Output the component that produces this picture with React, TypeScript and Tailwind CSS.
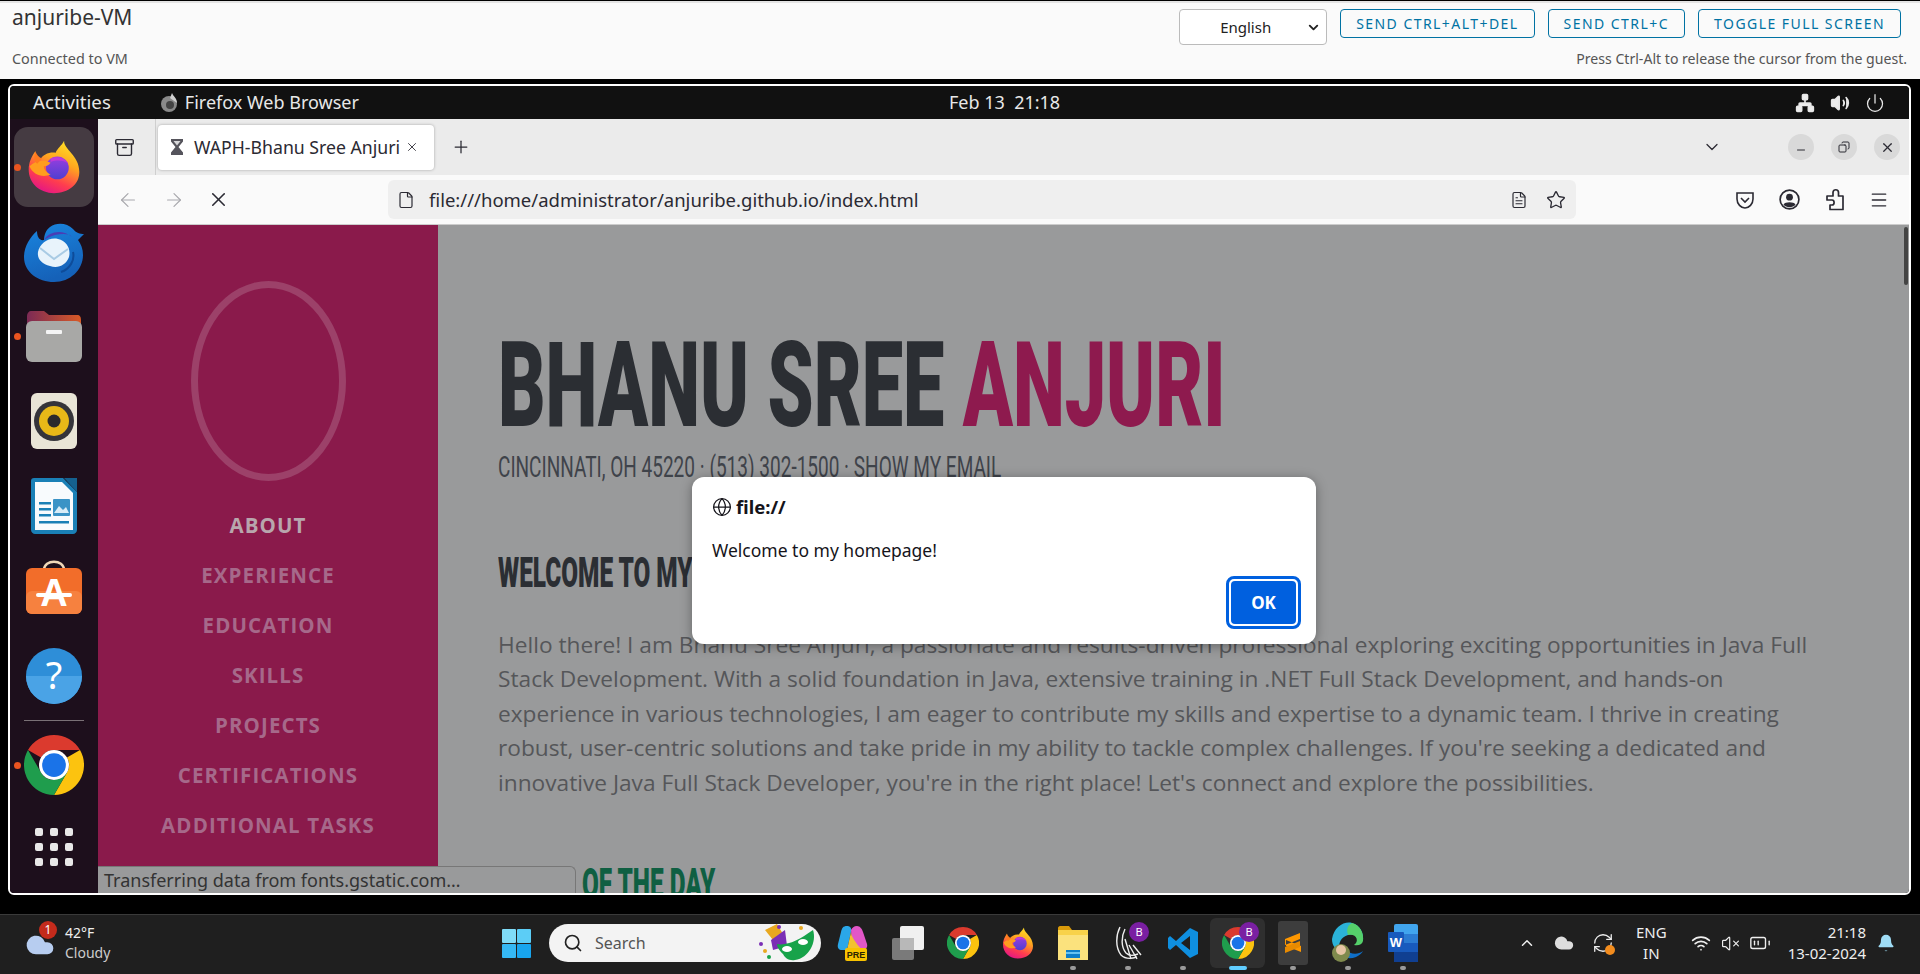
import {
  ArrowLeft,
  ArrowRight,
  Bell,
  ChevronDown,
  ChevronUp,
  FileText,
  File,
  Globe,
  Menu,
  Minus,
  Plus,
  Power,
  Search,
  Star,
  Volume2,
  VolumeX,
  Wifi,
  X,
  Archive,
  Network,
  Copy,
  RefreshCw,
  BatteryMedium,
  Cloud,
} from "lucide-react";

const navItems = ["ABOUT", "EXPERIENCE", "EDUCATION", "SKILLS", "PROJECTS", "CERTIFICATIONS", "ADDITIONAL TASKS"];

const paragraph = [
  "Hello there! I am Bhanu Sree Anjuri, a passionate and results-driven professional exploring exciting opportunities in Java Full",
  "Stack Development. With a solid foundation in Java, extensive training in .NET Full Stack Development, and hands-on",
  "experience in various technologies, I am eager to contribute my skills and expertise to a dynamic team. I thrive in creating",
  "robust, user-centric solutions and take pride in my ability to tackle complex challenges. If you're seeking a dedicated and",
  "innovative Java Full Stack Developer, you're in the right place! Let's connect and explore the possibilities.",
];

// brand icons, drawn by hand
const FirefoxIcon = ({ size = 54 }: { size?: number }) => (
  <svg width={size} height={size} viewBox="0 0 64 64">
    <defs>
      <linearGradient id="ffBody" x1="0.75" y1="0" x2="0.3" y2="1">
        <stop offset="0" stopColor="#ffe226" />
        <stop offset="0.38" stopColor="#ffa51f" />
        <stop offset="0.72" stopColor="#ff3d4e" />
        <stop offset="1" stopColor="#e31587" />
      </linearGradient>
      <linearGradient id="ffCore" x1="0.5" y1="0" x2="0.5" y2="1">
        <stop offset="0" stopColor="#9a3ee0" />
        <stop offset="1" stopColor="#4f3fd0" />
      </linearGradient>
    </defs>
    <path d="M44 1C43 11 62 18 62 38C62 53 49 63 32 63C15 63 2 51 2 35C2 27 5 20 10 13C10 18 12 22 15 24C19 17 26 14 34 15C36 10 41 7 44 1Z" fill="url(#ffBody)" />
    <circle cx="36" cy="33" r="13.5" fill="url(#ffCore)" />
    <path d="M28 22C34 19 44 20 49 28C44 24 36 23 28 26Z" fill="#c23bd6" />
    <path d="M3 31C9 25 19 22 28 27C25 31 22 31 20 31C20 35 23 38 28 41C18 45 7 41 3 31Z" fill="#ff9d1e" />
    <path d="M10 14C12 18 14 21 18 22L12 28C8 25 8 19 10 14Z" fill="#ff7a1e" />
  </svg>
);

const ThunderbirdIcon = () => (
  <svg width="62" height="60" viewBox="0 0 62 60">
    <defs>
      <linearGradient id="tbBody" x1="0" y1="0" x2="0.3" y2="1">
        <stop offset="0" stopColor="#1a86e0" />
        <stop offset="1" stopColor="#1561b8" />
      </linearGradient>
    </defs>
    <path d="M14 9C7 15 1 25 1 35C1 50 15 60 31 60C47 60 60 48 60 33C60 27 58 22 55 18L61 12C57 12 53 11 50 7C44 1 34 0 27 5C23 8 21 13 21 18C16 19 14 14 14 9Z" fill="url(#tbBody)" />
    <path d="M21 18C26 9 40 7 49 15C46 11 38 12 32 13C28 14 24 16 21 18Z" fill="#4a3db5" />
    <path d="M15 30C17 21 26 15 35 17C44 19 48 27 46 35C43 43 35 47 27 44C19 42 14 37 15 30Z" fill="#e8f3fb" />
    <path d="M17 26L31 37L45 27" fill="none" stroke="#a9cbe4" strokeWidth="2" />
    <path d="M50 30C52 38 47 47 38 50" fill="none" stroke="#0e4c9a" strokeWidth="2" />
  </svg>
);

const FilesIcon = () => (
  <svg width="56" height="52" viewBox="0 0 56 52">
    <defs>
      <linearGradient id="filesTab" x1="0" y1="0" x2="1" y2="0">
        <stop offset="0" stopColor="#7c2a55" />
        <stop offset="1" stopColor="#d95a26" />
      </linearGradient>
    </defs>
    <path d="M1 6C1 3 3 1 5 1H18L23 5H51C54 5 55 7 55 10V24H1Z" fill="url(#filesTab)" />
    <rect x="0" y="11" width="56" height="41" rx="6" fill="#a8a8a6" />
    <rect x="20" y="20" width="16" height="4" rx="1" fill="#f4f4f4" />
  </svg>
);

const RhythmboxIcon = () => (
  <svg width="46" height="56" viewBox="0 0 46 56">
    <rect width="46" height="56" rx="6" fill="#e9e4d6" />
    <circle cx="23" cy="28" r="20" fill="#35343a" />
    <circle cx="23" cy="28" r="15" fill="#e8b818" />
    <circle cx="23" cy="28" r="6.5" fill="#2b2a2c" />
  </svg>
);

const WriterIcon = () => (
  <svg width="46" height="56" viewBox="0 0 46 56">
    <path d="M3 0H32L46 14V52C46 54 44 56 42 56H4C2 56 0 54 0 52V3C0 1 1 0 3 0Z" fill="#1a80b6" />
    <path d="M4 4H31L42 15V52H4Z" fill="#f8fbfd" />
    <path d="M33 0H46V14Z" fill="#15618f" />
    <rect x="8" y="24" width="12" height="2.5" fill="#1a80b6" />
    <rect x="8" y="30" width="12" height="2.5" fill="#1a80b6" />
    <rect x="8" y="36" width="12" height="2.5" fill="#1a80b6" />
    <rect x="22" y="21" width="17" height="17" rx="1" fill="#3a93c6" />
    <path d="M23 35L28 28L32 32L35 29L38 35Z" fill="#d8ecf7" />
    <rect x="8" y="43" width="30" height="2.5" fill="#1a80b6" />
  </svg>
);

const StoreIcon = () => (
  <svg width="56" height="54" viewBox="0 0 56 54">
    <path d="M18 10C18 -1 38 -1 38 10" fill="none" stroke="#f0d8b8" strokeWidth="2.5" />
    <rect y="8" width="56" height="46" rx="6" fill="#f26d2a" />
    <rect y="31" width="56" height="23" rx="6" fill="#f6813f" />
    <text x="28" y="46" textAnchor="middle" fontSize="38" fontWeight="700" fill="#fff" fontFamily="Liberation Sans">A</text>
    <rect x="10" y="33" width="36" height="4" rx="2" fill="#fff" />
  </svg>
);

const HelpIcon = () => (
  <svg width="56" height="56" viewBox="0 0 56 56">
    <circle cx="28" cy="28" r="28" fill="#2e8ed8" />
    <path d="M0 28H56A28 28 0 0 1 0 28Z" fill="#4aa3e6" />
    <text x="28" y="41" textAnchor="middle" fontSize="38" fill="#fff" fontFamily="Noto Sans">?</text>
  </svg>
);

const ChromeIcon = ({ size = 60 }: { size?: number }) => (
  <svg width={size} height={size} viewBox="0 0 48 48">
    <path d="M24 0A24 24 0 0 1 44.8 12H24A12 12 0 0 0 13.6 18L3.2 12A24 24 0 0 1 24 0Z" fill="#db3a2e" />
    <path d="M44.8 12A24 24 0 0 1 24 48L34.4 30A12 12 0 0 0 34.4 18Z" fill="#fcc30f" />
    <path d="M3.2 12L13.6 30A12 12 0 0 0 24 36L24 48A24 24 0 0 1 3.2 12Z" fill="#1f9d4d" />
    <path d="M24 36L34.4 30L24 48Z" fill="#1f9d4d" />
    <circle cx="24" cy="24" r="12" fill="#fff" />
    <circle cx="24" cy="24" r="9.5" fill="#1a73e8" />
  </svg>
);

const CopilotIcon = () => (
  <svg width="32" height="38" viewBox="0 0 32 38">
    <path d="M10 2C6 2 5 4 4 8L1 20C0 24 2 26 5 26H10L14 8C15 4 13 2 10 2Z" fill="#2aa7e8" />
    <path d="M14 6C15 4 17 2 20 2C23 2 25 5 26 8L30 20C31 24 28 26 25 26H15Z" fill="#e257c8" />
    <path d="M10 26L14 8C14 12 18 18 25 26Z" fill="#f2c230" />
    <rect x="8" y="24" width="22" height="13" rx="2" fill="#f8c200" />
    <text x="19" y="34" textAnchor="middle" fontSize="9" fontWeight="700" fill="#2a2200" fontFamily="Liberation Sans">PRE</text>
  </svg>
);

const TaskViewIcon = () => (
  <svg width="32" height="34" viewBox="0 0 32 34">
    <rect x="8" y="0" width="24" height="24" rx="2" fill="#f0f0f0" />
    <rect x="0" y="12" width="22" height="22" rx="2" fill="#7a7a7a" />
    <rect x="8" y="12" width="14" height="12" fill="#b8b8b8" />
  </svg>
);

const ExplorerIcon = () => (
  <svg width="30" height="34" viewBox="0 0 30 34">
    <path d="M0 2C0 1 1 0 2 0H11L14 4H0Z" fill="#d99a0a" />
    <rect y="4" width="30" height="30" fill="#f8d24a" />
    <rect y="9" width="30" height="25" fill="#fbe27d" />
    <path d="M8 24H22V32H8Z" fill="#0f7fc8" />
    <rect x="8" y="26" width="14" height="2" fill="#67c3f0" />
  </svg>
);

const QuillIcon = () => (
  <svg width="30" height="36" viewBox="0 0 30 36" fill="none" stroke="#eee" strokeWidth="1.4">
    <path d="M7 2C3 10 2 22 8 30C12 34 18 34 24 32" />
    <path d="M12 4C8 12 8 22 13 28C16 31 20 31 25 29" />
    <path d="M16 20L24 34M20 20L28 30M12 14L18 34" />
  </svg>
);

const VscodeIcon = () => (
  <svg width="32" height="32" viewBox="0 0 32 32">
    <path d="M23 1L31 5V27L23 31L9 18L3 23L1 21V11L3 9L9 14ZM23 9L14 16L23 23Z" fill="#0f8fe0" fillRule="evenodd" />
  </svg>
);

const SublimeIcon = () => (
  <svg width="30" height="44" viewBox="0 0 30 44">
    <rect width="30" height="44" rx="3" fill="#3d3d3d" />
    <path d="M7 18L22 12V18L7 24ZM8 25L23 31V25L8 19Z" fill="#ff9800" />
    <path d="M7 26L22 20V26L7 32Z" fill="#e88a00" />
  </svg>
);

const EdgeIcon = () => (
  <svg width="32" height="44" viewBox="0 0 32 44">
    <path d="M0 18C2 6 12 0 20 2C28 4 32 12 31 20C28 14 22 12 16 14C9 16 6 22 7 30C3 28 0 24 0 18Z" fill="#2bb2d8" />
    <path d="M20 2C28 4 32 12 31 20C30 24 26 25 22 24C28 20 24 12 16 14C14 8 16 4 20 2Z" fill="#55d06a" />
    <path d="M7 30C9 36 16 39 24 36C28 34 30 32 31 30C26 34 18 34 14 28Z" fill="#0f6fc8" />
    <circle cx="9" cy="32" r="9" fill="#7f8a4d" />
    <circle cx="9" cy="29" r="5" fill="#e6c5a5" />
  </svg>
);

const WordIcon = () => (
  <svg width="30" height="38" viewBox="0 0 30 38">
    <rect x="6" y="0" width="24" height="38" rx="2" fill="#41a5ee" />
    <rect x="6" y="10" width="24" height="9" fill="#2b7cd3" />
    <rect x="6" y="19" width="24" height="9" fill="#185abd" />
    <rect x="6" y="28" width="24" height="10" fill="#103f91" />
    <rect x="0" y="8" width="16" height="20" rx="1" fill="#185abd" />
    <text x="8" y="23" textAnchor="middle" fontSize="13" fontWeight="700" fill="#fff" fontFamily="Liberation Sans">W</text>
  </svg>
);

const WindowsLogo = () => (
  <svg width="29" height="29" viewBox="0 0 29 29">
    <rect width="14" height="14" rx="1" fill="#7fdcf8" />
    <rect x="15" width="14" height="14" rx="1" fill="#5ccdf6" />
    <rect y="15" width="14" height="14" rx="1" fill="#35b8f4" />
    <rect x="15" y="15" width="14" height="14" rx="1" fill="#18a5ee" />
  </svg>
);

const MaskIcon = () => (
  <svg width="62" height="38" viewBox="0 0 62 38">
    <path d="M8 6L20 0L26 10L16 16Z" fill="#e8a820" />
    <path d="M14 16L28 6L30 22L16 26Z" fill="#7b2fb5" />
    <path d="M20 20C30 22 42 16 56 6C60 18 52 34 38 36C32 37 28 34 26 30C24 28 20 24 20 20Z" fill="#17a34a" />
    <ellipse cx="30" cy="25" rx="5" ry="3" fill="#fff" />
    <ellipse cx="46" cy="18" rx="5" ry="3" fill="#fff" />
    <circle cx="4" cy="20" r="2" fill="#7b2fb5" />
    <circle cx="12" cy="33" r="2" fill="#17a34a" />
    <circle cx="22" cy="3" r="2" fill="#7b2fb5" />
    <circle cx="44" cy="4" r="2" fill="#e8a820" />
    <circle cx="8" cy="27" r="2" fill="#e8a820" />
  </svg>
);

const TabHourglass = () => (
  <svg width="16" height="18" viewBox="0 0 16 18" className="shrink-0">
    <path d="M2 1H14V3.5L9.5 9L14 14.5V17H2V14.5L6.5 9L2 3.5Z" fill="#55545c" />
    <path d="M4.5 3H11.5L8 7.5Z" fill="#d8d8da" />
  </svg>
);

const AccountIcon = () => (
  <svg width="21" height="21" viewBox="0 0 21 21">
    <circle cx="10.5" cy="10.5" r="9.4" fill="none" stroke="#2b2a33" strokeWidth="1.7" />
    <circle cx="10.5" cy="8.2" r="3.4" fill="#2b2a33" />
    <path d="M4.5 15.5C6 12.5 15 12.5 16.5 15.5C14 19 7 19 4.5 15.5Z" fill="#2b2a33" />
  </svg>
);

const ExtensionIcon = () => (
  <svg width="21" height="23" viewBox="0 0 21 23" fill="none" stroke="#2b2a33" strokeWidth="1.7" strokeLinejoin="round">
    <path d="M3 8H9V4.5C9 0.8 14.5 0.8 14.5 4.5V8H19V21.5H6V17H8C10.8 17 10.8 12 8 12H3Z" />
  </svg>
);

const dockApps = [
  { key: "firefox", icon: <FirefoxIcon />, running: true, active: true, height: "h-[80px]", gap: "mt-[8px]" },
  { key: "thunderbird", icon: <ThunderbirdIcon />, running: false, active: false, height: "h-[60px]", gap: "mt-[15px]" },
  { key: "files", icon: <FilesIcon />, running: true, active: false, height: "h-[60px]", gap: "mt-[24px]" },
  { key: "rhythmbox", icon: <RhythmboxIcon />, running: false, active: false, height: "h-[60px]", gap: "mt-[25px]" },
  { key: "writer", icon: <WriterIcon />, running: false, active: false, height: "h-[60px]", gap: "mt-[25px]" },
  { key: "store", icon: <StoreIcon />, running: false, active: false, height: "h-[60px]", gap: "mt-[21px]" },
  { key: "help", icon: <HelpIcon />, running: false, active: false, height: "h-[60px]", gap: "mt-[29px]" },
];

const taskbarApps = [
  { key: "copilot", icon: <CopilotIcon />, dot: false, active: false, badge: false },
  { key: "taskview", icon: <TaskViewIcon />, dot: false, active: false, badge: false },
  { key: "chrome", icon: <ChromeIcon size={32} />, dot: false, active: false, badge: false },
  { key: "firefox", icon: <FirefoxIcon size={32} />, dot: false, active: false, badge: false },
  { key: "explorer", icon: <ExplorerIcon />, dot: true, active: false, badge: false },
  { key: "quill", icon: <QuillIcon />, dot: true, active: false, badge: true },
  { key: "vscode", icon: <VscodeIcon />, dot: true, active: false, badge: false },
  { key: "chrome-active", icon: <ChromeIcon size={32} />, dot: false, active: true, badge: true },
  { key: "sublime", icon: <SublimeIcon />, dot: true, active: false, badge: false },
  { key: "edge", icon: <EdgeIcon />, dot: true, active: false, badge: false },
  { key: "word", icon: <WordIcon />, dot: true, active: false, badge: false },
];

const Header = () => (
  <header className="h-[78px] shrink-0 bg-[#fafafa] border-t-2 border-t-[#e4e4e4] mt-[1px] flex justify-between pl-[12px] pr-[13px] text-[#333]">
    <div className="flex flex-col">
      <div className="text-[21px] leading-[26px] mt-[1px]">anjuribe-VM</div>
      <div className="text-[14.4px] leading-[18px] mt-[20px] text-[#555]">Connected to VM</div>
    </div>
    <div className="flex flex-col items-end">
      <div className="flex mt-[6px] pr-[6px]">
        <div className="w-[148px] h-[36px] bg-white border border-[#bbb] rounded flex items-center pl-[40px] text-[15px] text-[#222]">
          English
          <ChevronDown size={15} strokeWidth={3} className="ml-auto mr-[5px]" />
        </div>
        {["SEND CTRL+ALT+DEL", "SEND CTRL+C", "TOGGLE FULL SCREEN"].map((label) => (
          <div
            key={label}
            className="ml-[13px] h-[29px] px-[15px] border border-[#0072a3] rounded text-[#0072a3] text-[14px] tracking-[1.45px] flex items-center whitespace-nowrap"
          >
            {label}
          </div>
        ))}
      </div>
      <div className="text-[14.1px] leading-[18px] mt-[5px] text-[#555]">Press Ctrl-Alt to release the cursor from the guest.</div>
    </div>
  </header>
);

const UbuntuBar = () => (
  <div className="h-[33px] shrink-0 bg-[#111] text-[#e8e8e8] text-[18px] flex items-center pl-[23px] pr-[24px]">
    <span className="text-[18.7px]">Activities</span>
    <svg width="22" height="22" viewBox="0 0 22 22" className="ml-[47px]">
      <circle cx="11" cy="12" r="8" fill="#8a8a8a" />
      <circle cx="12" cy="13" r="4" fill="#444" />
      <path d="M14 1C15 4 19 6 19 11L12 6Z" fill="#cfcfcf" />
    </svg>
    <span className="ml-[5px]">Firefox Web Browser</span>
    <span className="ml-[590px]">Feb 13{"\u00a0\u00a0"}21:18</span>
    <div className="ml-auto flex items-center gap-[15px]">
      <Network size={20} fill="#eee" />
      <Volume2 size={20} fill="#eee" />
      <Power size={20} strokeWidth={1.5} />
    </div>
  </div>
);

const Dock = () => (
  <aside className="w-[88px] shrink-0 bg-[#1d0f1c] flex flex-col items-center relative">
    {dockApps.map((app) => (
      <div key={app.key} className={`${app.gap} ${app.height} w-[80px] relative flex items-center justify-center ${app.active ? "bg-[#453b42] rounded-[14px]" : ""}`}>
        {app.running && <span className="absolute left-[0px] top-1/2 -mt-[3px] w-[7px] h-[7px] rounded-full bg-[#e95420]" />}
        {app.icon}
      </div>
    ))}
    <div className="w-[60px] h-px bg-[#7a7176] mt-[14px]" />
    <div className="mt-[14px] h-[60px] w-[80px] relative flex items-center justify-center">
      <span className="absolute left-[0px] top-1/2 -mt-[3px] w-[7px] h-[7px] rounded-full bg-[#e95420]" />
      <ChromeIcon />
    </div>
    <div className="mt-[33px] grid grid-cols-3 gap-[7px]">
      {Array.from({ length: 9 }).map((_, i) => (
        <span key={i} className="w-[8px] h-[8px] rounded-[2px] bg-[#e8e8e8]" />
      ))}
    </div>
  </aside>
);

const TabBar = () => (
  <div className="h-[56px] shrink-0 bg-[#ebebeb] flex items-center text-[#2b2a33]">
    <div className="w-[58px] h-full border-r border-[#cfcfcf] flex items-center justify-center mr-[1px] pr-[4px]">
      <Archive size={21} strokeWidth={1.6} />
    </div>
    <div className="w-[276px] h-[45px] ml-[1px] bg-white rounded shadow-[0_0_3px_rgba(0,0,0,0.3)] flex items-center pl-[11px] text-[17.7px] whitespace-nowrap">
      <TabHourglass />
      <span className="ml-[9px]">WAPH-Bhanu Sree Anjuri</span>
      <X size={14} strokeWidth={1.5} className="ml-[5px]" />
    </div>
    <Plus size={20} strokeWidth={1.5} className="ml-[17px]" />
    <ChevronDown size={20} strokeWidth={1.5} className="ml-auto" />
    <div className="flex items-center gap-[17px] ml-[66px] mr-[9px]">
      <span className="w-[26px] h-[26px] rounded-full bg-[#d9d9d9] flex items-center justify-center"><Minus size={12} className="mt-[5px]" /></span>
      <span className="w-[26px] h-[26px] rounded-full bg-[#d9d9d9] flex items-center justify-center"><Copy size={12} className="-scale-x-100" /></span>
      <span className="w-[26px] h-[26px] rounded-full bg-[#d9d9d9] flex items-center justify-center"><X size={15} /></span>
    </div>
  </div>
);

const Toolbar = () => (
  <div className="h-[50px] shrink-0 bg-[#fafafa] border-b border-[#ccc] flex items-center text-[#2b2a33]">
    <ArrowLeft size={22} strokeWidth={1.3} className="ml-[19px] text-[#a8a8ad]" />
    <ArrowRight size={22} strokeWidth={1.3} className="ml-[24px] text-[#a8a8ad]" />
    <X size={23} strokeWidth={1.6} className="ml-[22px]" />
    <div className="ml-[158px] h-[39px] w-[1188px] bg-[#efefef] rounded-md flex items-center pl-[9px] text-[18.5px]">
      <File size={18} strokeWidth={1.6} />
      <span className="ml-[14px]">file:///home/administrator/anjuribe.github.io/index.html</span>
      <div className="ml-auto flex items-center gap-[18px] pr-[10px]">
        <FileText size={18} strokeWidth={1.6} />
        <Star size={20} strokeWidth={1.6} />
      </div>
    </div>
    <div className="ml-auto flex items-center gap-[24px] pr-[20px]">
      <svg width="20" height="20" viewBox="0 0 20 20" fill="none" stroke="#2b2a33" strokeWidth="1.6">
        <path d="M2 3H18V9C18 14 14 18 10 18C6 18 2 14 2 9Z" />
        <path d="M6 8L10 12L14 8" />
      </svg>
      <AccountIcon />
      <ExtensionIcon />
      <Menu size={20} strokeWidth={1.6} />
    </div>
  </div>
);

const Sidebar = () => (
  <div className="w-[340px] shrink-0 bg-[#8a1a4b] flex flex-col items-center pt-[56px]">
    <div className="w-[155px] h-[200px] rounded-[50%] border-[7px] border-[#9c4169]" />
    <nav className="mt-[19px] flex flex-col items-center font-['Open_Sans'] font-bold text-[20.5px] tracking-[1.1px]">
      {navItems.map((item, i) => (
        <div key={item} className={`h-[50px] flex items-center whitespace-nowrap ${i === 0 ? "text-[#b8a6ad]" : "text-[#a6698a]"}`}>
          {item}
        </div>
      ))}
    </nav>
  </div>
);

const MainContent = () => (
  <div className="flex-1 bg-[#999a9b] relative overflow-hidden pl-[60px] font-['Roboto'] whitespace-nowrap">
    <h1 className="mt-[119px] h-[84px] leading-[84px] text-[118px] font-black text-[#2b2e33] scale-x-[0.625] origin-left">
      BHANU SREE <span className="text-[#8e1a4e]">ANJURI</span>
    </h1>
    <div className="mt-[24px] h-[30px] leading-[30px] text-[30px] text-[#3f434a] scale-x-[0.634] origin-left">
      CINCINNATI, OH 45220 · (513) 302-1500 · SHOW MY EMAIL
    </div>
    <h2 className="mt-[71px] h-[40px] leading-[40px] text-[42px] font-black text-[#2b2e33] scale-x-[0.58] origin-left">WELCOME TO MY</h2>
    <div className="mt-[35px] font-['Open_Sans'] text-[22.7px] leading-[34.4px] text-[#555659]">
      {paragraph.map((line) => (
        <div key={line}>{line}</div>
      ))}
    </div>
    <h2 className="mt-[64px] ml-[84px] h-[40px] leading-[40px] text-[42px] font-black text-[#0f5f42] scale-x-[0.58] origin-left">OF THE DAY</h2>
    <div className="absolute right-[1px] top-[2px] w-[4px] h-[58px] rounded bg-[#444]" />
  </div>
);

const AlertDialog = () => (
  <div className="absolute left-[682px] top-[391px] w-[624px] h-[167px] bg-white rounded-xl shadow-[0_2px_12px_rgba(0,0,0,0.35)] px-[20px] pt-[19px] font-['Noto_Sans'] text-[#15141a]">
    <div className="flex items-center font-bold text-[18.5px] leading-[22px]">
      <Globe size={20} strokeWidth={1.5} />
      <span className="ml-[4px]">file://</span>
    </div>
    <div className="mt-[20px] text-[17.5px] leading-[24px]">Welcome to my homepage!</div>
    <div className="absolute right-[15px] bottom-[15px] w-[75px] h-[53px] rounded-lg border-[3px] border-[#0060df] p-[2px]">
      <div className="w-full h-full rounded bg-[#0060df] text-white font-bold text-[17px] flex items-center justify-center">OK</div>
    </div>
  </div>
);

const StatusPanel = () => (
  <div className="absolute left-[88px] bottom-0 w-[478px] h-[27px] bg-[#999a9b] border-t border-r border-[#777] rounded-tr-md pl-[6px] text-[18px] leading-[26px] text-[#333] font-['Noto_Sans'] whitespace-nowrap">
    Transferring data from fonts.gstatic.com…
  </div>
);

const Taskbar = () => (
  <footer className="h-[60px] shrink-0 bg-[#1f1f1f] border-t border-[#3a3a3a] pb-[3px] flex items-center text-[#eee] font-['Noto_Sans']">
    <div className="w-[502px] shrink-0 flex items-center pl-[24px]">
      <div className="relative w-[36px] h-[36px]">
        <Cloud size={32} fill="#b7cdf0" strokeWidth={0} className="absolute left-0 bottom-0" />
        <span className="absolute left-[15px] top-[-4px] w-[18px] h-[18px] rounded-full bg-[#c42b1c] text-white text-[12px] flex items-center justify-center">1</span>
      </div>
      <div className="ml-[5px] text-[14px] leading-[20px]">
        <div>42°F</div>
        <div className="text-[#ccc]">Cloudy</div>
      </div>
    </div>
    <WindowsLogo />
    <div className="ml-[18px] w-[272px] h-[38px] rounded-full bg-[#f3f3f3] flex items-center pl-[14px] pr-[2px] text-[#555] text-[16px]">
      <Search size={20} className="text-[#222]" />
      <span className="ml-[12px]">Search</span>
      <span className="ml-auto"><MaskIcon /></span>
    </div>
    <div className="flex items-center ml-[4px]">
      {taskbarApps.map((app) => (
        <div key={app.key} className={`w-[55px] h-[50px] relative flex items-center justify-center rounded-md ${app.active ? "bg-[#2f2f2f]" : ""}`}>
          {app.icon}
          {app.badge && (
            <span className="absolute right-[6px] top-[4px] w-[20px] h-[20px] rounded-full bg-[#7a1fa2] text-white text-[11px] flex items-center justify-center">B</span>
          )}
          {app.dot && <span className="absolute bottom-[-2px] w-[6px] h-[4px] rounded-full bg-[#9a9a9a]" />}
          {app.active && <span className="absolute bottom-[-2px] w-[18px] h-[4px] rounded-full bg-[#60cdff]" />}
        </div>
      ))}
    </div>
    <div className="ml-auto flex items-center pr-[24px]">
      <ChevronUp size={18} />
      <Cloud size={22} fill="#ddd" strokeWidth={0} className="ml-[17px]" />
      <span className="ml-[17px] relative">
        <RefreshCw size={22} strokeWidth={1.4} />
        <span className="absolute right-[-1px] bottom-[-1px] w-[10px] h-[10px] rounded-full bg-[#f28c1e]" />
      </span>
      <div className="ml-[22px] text-center text-[15px] leading-[21px]">
        <div>ENG</div>
        <div>IN</div>
      </div>
      <Wifi size={20} className="ml-[24px]" />
      <VolumeX size={19} strokeWidth={1.5} className="ml-[10px]" />
      <BatteryMedium size={22} strokeWidth={1.5} className="ml-[9px]" />
      <div className="ml-[17px] text-right text-[15px] leading-[21px]">
        <div>21:18</div>
        <div>13-02-2024</div>
      </div>
      <Bell size={20} fill="#9fdcf5" strokeWidth={0} className="ml-[10px]" />
    </div>
  </footer>
);

export default function App() {
  return (
    <div className="w-[1920px] h-[974px] flex flex-col overflow-hidden bg-black font-['Noto_Sans']">
      <Header />
      <div className="h-[835px] shrink-0 bg-black pt-[5px] pl-[8px] pr-[9px]">
        <div className="relative h-[811px] border-2 border-white rounded-md overflow-hidden flex flex-col">
          <UbuntuBar />
          <div className="flex-1 flex min-h-0">
            <Dock />
            <div className="flex-1 flex flex-col min-w-0">
              <TabBar />
              <Toolbar />
              <div className="flex-1 flex min-h-0">
                <Sidebar />
                <MainContent />
              </div>
            </div>
          </div>
          <AlertDialog />
          <StatusPanel />
        </div>
      </div>
      <Taskbar />
    </div>
  );
}
